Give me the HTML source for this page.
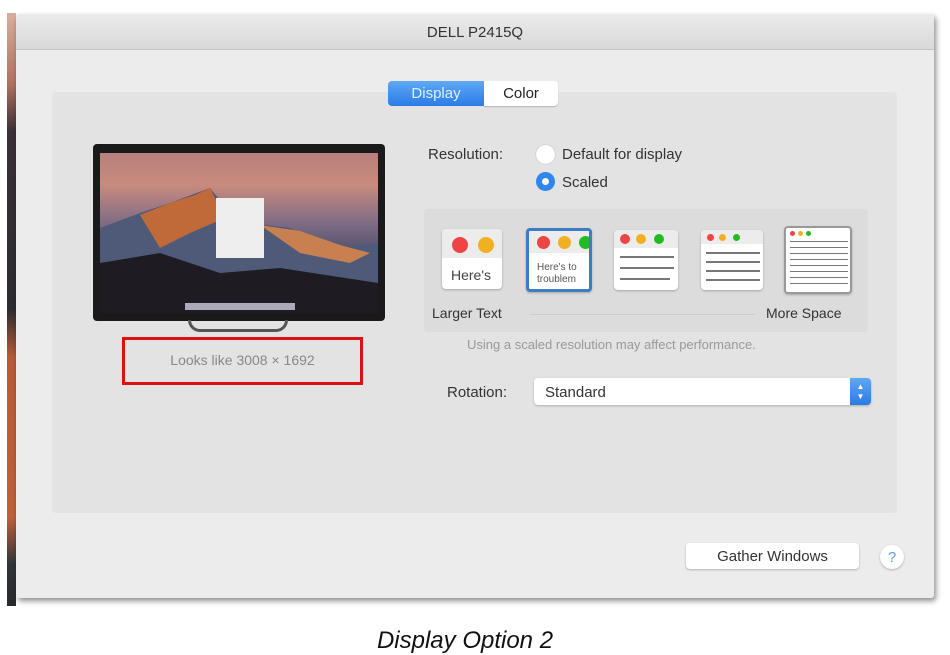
<!DOCTYPE html>
<html><head><meta charset="utf-8"><style>
*{margin:0;padding:0;box-sizing:border-box}
body{width:950px;height:655px;background:#fff;position:relative;overflow:hidden;font-family:"Liberation Sans",sans-serif;color:#333}
.a{position:absolute}
.win{left:16px;top:14px;width:918px;height:584px;background:#ececec;box-shadow:2px 3px 6px rgba(0,0,0,.45);border-radius:3px}
.title{left:16px;top:14px;width:918px;height:36px;background:linear-gradient(#ebebeb,#d9d9d9);border-bottom:1px solid #c4c4c4;text-align:center;font-size:15px;line-height:38px;color:#333;border-radius:3px 3px 0 0}
.panel{left:52px;top:92px;width:845px;height:421px;background:#e3e3e3;border-radius:4px}
.lbl{font-size:15px;color:#333}
.thumb{background:#fff;border-radius:4px;box-shadow:0 1px 2px rgba(0,0,0,.25);overflow:hidden}
.dot{position:absolute;border-radius:50%}
.ln{position:absolute;height:2px;background:#777}
</style></head><body>
<div class="a" style="left:7px;top:13px;width:9px;height:593px;background:linear-gradient(#d8b0a0 0%,#b07060 12%,#3a3038 20%,#2c2c30 50%,#b85a35 58%,#c0603a 85%,#30343a 93%,#2a2a2a 100%)"></div>
<div class="a win"></div>
<div class="a title">DELL P2415Q</div>
<div class="a panel"></div>
<!-- tabs -->
<div class="a" style="left:388px;top:81px;width:96px;height:25px;background:linear-gradient(#5fa8f5,#2a7be6);border-radius:4px 0 0 4px;color:#dfefff;font-size:15px;text-align:center;line-height:25px">Display</div>
<div class="a" style="left:484px;top:81px;width:74px;height:25px;background:#fff;border-radius:0 4px 4px 0;box-shadow:0 1px 1px rgba(0,0,0,.2);font-size:15px;text-align:center;line-height:25px;color:#222">Color</div>
<!-- monitor -->
<div class="a" style="left:93px;top:144px;width:292px;height:177px;background:#1a1a1a;border-radius:4px"></div>
<div class="a" style="left:100px;top:153px;width:278px;height:160px;overflow:hidden;background:linear-gradient(#b77f7c 0%,#c88b7e 20%,#7c6a85 45%,#3e4660 70%,#1c1a20 100%)">
<svg width="278" height="160" style="position:absolute;left:0;top:0"><polygon points="0,75 40,60 70,50 110,35 130,60 150,70 190,75 230,95 278,90 278,160 0,160" fill="#4e5a78"/><polygon points="40,62 70,50 95,42 110,35 125,65 90,80 60,95" fill="#c06a3a"/><polygon points="160,72 200,78 240,92 270,100 250,110 200,100" fill="#c98050"/><polygon points="0,110 60,100 120,120 180,115 278,130 278,160 0,160" fill="#1e1c22"/></svg>
<div class="a" style="left:116px;top:45px;width:48px;height:60px;background:#eee"></div>
<div class="a" style="left:85px;top:150px;width:110px;height:7px;background:#aab"></div>
</div>
<div class="a" style="left:188px;top:320px;width:100px;height:12px;border:3px solid #555;border-top:none;border-radius:0 0 50px 50px"></div>
<div class="a" style="left:122px;top:337px;width:241px;height:48px;border:3px solid #d11"></div>
<div class="a" style="left:122px;top:352px;width:241px;text-align:center;font-size:14px;color:#888">Looks like 3008 × 1692</div>
<!-- resolution -->
<div class="a lbl" style="left:428px;top:146px">Resolution:</div>
<div class="a" style="left:536px;top:145px;width:19px;height:19px;border-radius:50%;background:#fff;box-shadow:0 0 1px #888"></div>
<div class="a lbl" style="left:562px;top:146px">Default for display</div>
<div class="a" style="left:536px;top:172px;width:19px;height:19px;border-radius:50%;background:#2f86ec"></div>
<div class="a" style="left:542px;top:178px;width:7px;height:7px;border-radius:50%;background:#fff"></div>
<div class="a lbl" style="left:562px;top:174px">Scaled</div>
<div class="a" style="left:424px;top:209px;width:444px;height:123px;background:#dcdcdc;border-radius:4px"></div>
<!-- thumbs -->
<div class="a thumb" style="left:442px;top:229px;width:60px;height:60px;background:#fff">
<div class="a" style="left:0;top:0;width:60px;height:29px;background:#ececec"></div>
<div class="dot" style="left:10px;top:8px;width:16px;height:16px;background:#e44"></div>
<div class="dot" style="left:36px;top:8px;width:16px;height:16px;background:#f0b020"></div>
<div class="a" style="left:9px;top:38px;font-size:14px;color:#444">Here's</div></div>
<div class="a thumb" style="left:526px;top:228px;width:66px;height:64px;border:3px solid #3f7cc8">
<div class="a" style="left:0;top:0;width:66px;height:22px;background:#ececec"></div>
<div class="dot" style="left:8px;top:5px;width:13px;height:13px;background:#e44"></div>
<div class="dot" style="left:29px;top:5px;width:13px;height:13px;background:#f0b020"></div>
<div class="dot" style="left:50px;top:5px;width:13px;height:13px;background:#2b2"></div>
<div class="a" style="left:8px;top:31px;font-size:10px;color:#555;line-height:12px;white-space:nowrap">Here's to<br>troublem</div></div>
<div class="a thumb" style="left:614px;top:230px;width:64px;height:60px">
<div class="a" style="left:0;top:0;width:64px;height:18px;background:#ececec"></div>
<div class="dot" style="left:6px;top:4px;width:10px;height:10px;background:#e44"></div>
<div class="dot" style="left:22px;top:4px;width:10px;height:10px;background:#f0b020"></div>
<div class="dot" style="left:40px;top:4px;width:10px;height:10px;background:#2b2"></div>
<div class="ln" style="left:6px;top:26px;width:54px"></div><div class="ln" style="left:6px;top:37px;width:54px"></div><div class="ln" style="left:6px;top:48px;width:50px"></div></div>
<div class="a thumb" style="left:701px;top:230px;width:62px;height:60px">
<div class="a" style="left:0;top:0;width:62px;height:14px;background:#ececec"></div>
<div class="dot" style="left:6px;top:4px;width:7px;height:7px;background:#e44"></div>
<div class="dot" style="left:18px;top:4px;width:7px;height:7px;background:#f0b020"></div>
<div class="dot" style="left:32px;top:4px;width:7px;height:7px;background:#2b2"></div>
<div class="ln" style="left:5px;top:22px;width:54px"></div><div class="ln" style="left:5px;top:31px;width:54px"></div><div class="ln" style="left:5px;top:40px;width:54px"></div><div class="ln" style="left:5px;top:49px;width:54px"></div></div>
<div class="a thumb" style="left:784px;top:226px;width:68px;height:68px;border:2px solid #999">
<div class="dot" style="left:4px;top:3px;width:5px;height:5px;background:#e44"></div>
<div class="dot" style="left:12px;top:3px;width:5px;height:5px;background:#f0b020"></div>
<div class="dot" style="left:20px;top:3px;width:5px;height:5px;background:#2b2"></div>
<div class="ln" style="left:4px;top:13px;width:58px;height:1px"></div><div class="ln" style="left:4px;top:19px;width:58px;height:1px"></div><div class="ln" style="left:4px;top:25px;width:58px;height:1px"></div><div class="ln" style="left:4px;top:31px;width:58px;height:1px"></div><div class="ln" style="left:4px;top:37px;width:58px;height:1px"></div><div class="ln" style="left:4px;top:43px;width:58px;height:1px"></div><div class="ln" style="left:4px;top:49px;width:58px;height:1px"></div><div class="ln" style="left:4px;top:55px;width:58px;height:1px"></div></div>
<div class="a" style="left:432px;top:305px;font-size:14px;color:#333">Larger Text</div>
<div class="a" style="left:766px;top:305px;font-size:14px;color:#333">More Space</div>
<div class="a" style="left:530px;top:314px;width:225px;height:1px;background:#ccc"></div>
<div class="a" style="left:467px;top:337px;font-size:13px;color:#999">Using a scaled resolution may affect performance.</div>
<!-- rotation -->
<div class="a lbl" style="left:447px;top:384px">Rotation:</div>
<div class="a" style="left:534px;top:378px;width:337px;height:27px;background:#fff;border-radius:4px;box-shadow:0 1px 2px rgba(0,0,0,.25)"></div>
<div class="a lbl" style="left:545px;top:384px">Standard</div>
<div class="a" style="left:850px;top:378px;width:21px;height:27px;background:linear-gradient(#5fa8f5,#2a7be6);border-radius:0 4px 4px 0;color:#fff;font-size:8px;text-align:center;line-height:10px;padding-top:4px">▲<br>▼</div>
<!-- bottom -->
<div class="a" style="left:686px;top:543px;width:173px;height:26px;background:#fff;border-radius:4px;box-shadow:0 1px 2px rgba(0,0,0,.25);display:flex;align-items:center;justify-content:center;font-size:15px;color:#333">Gather Windows</div>
<div class="a" style="left:880px;top:545px;width:24px;height:24px;border-radius:50%;background:#fff;box-shadow:0 1px 2px rgba(0,0,0,.25);display:flex;align-items:center;justify-content:center;font-size:15px;color:#5a9fd8">?</div>
<div class="a" style="left:0;top:627px;width:930px;text-align:center;font-size:24px;font-style:italic;color:#111">Display Option 2</div>
</body></html>
